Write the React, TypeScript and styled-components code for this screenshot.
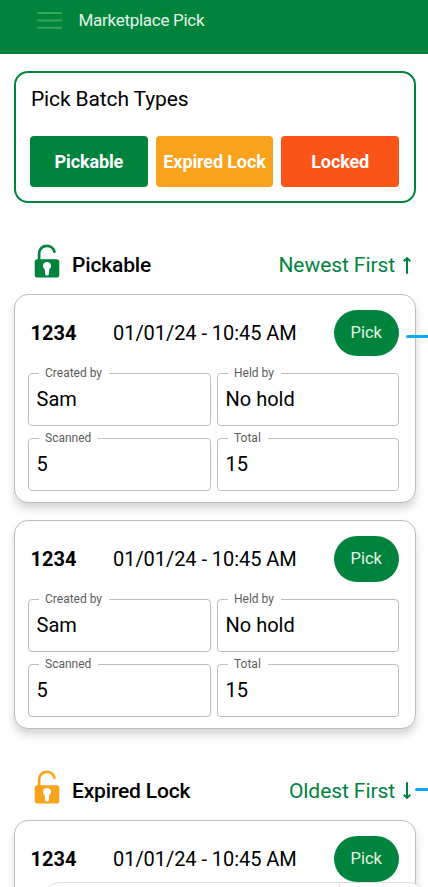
import React from "react";
import styled, { createGlobalStyle } from "styled-components";

const GREEN = "#00843d";
const AMBER = "#f9a21b";
const RED = "#fb5419";

const GlobalStyle = createGlobalStyle`
  *, *::before, *::after { box-sizing: border-box; }
  body { margin: 0; background: #fff; }
  button { font: inherit; border: 0; padding: 0; }
`;

const Screen = styled.div`
  position: relative;
  width: 428px;
  height: 887px;
  overflow: hidden;
  background: #fff;
  color: #000;
  font-family: Roboto, "Liberation Sans", sans-serif;
  font-size: 20px;
  line-height: 24px;
  white-space: nowrap;
`;

const Header = styled.header`
  height: 54px;
  padding: 8px 0 0 37px;
  display: flex;
  align-items: flex-start;
  gap: 16.5px;
  background: ${GREEN};
  color: #e4f3e9;
`;

const MenuButton = styled.button`
  width: 25px;
  height: 25px;
  background: none;
  svg { display: block; }
`;

const Title = styled.h1`
  margin: 0;
  font-size: 17px;
  font-weight: 400;
  line-height: 25px;
  letter-spacing: -0.28px;
`;

const TypesPanel = styled.section`
  margin: 17px 12px 0 14px;
  height: 132px;
  padding: 14px 15px 0 14px;
  border: 2px solid ${GREEN};
  border-radius: 14px;
`;

const PanelTitle = styled.h2`
  margin: 0 0 25px 1px;
  font-size: 21px;
  font-weight: 400;
  line-height: 24px;
  letter-spacing: -0.13px;
`;

const TypeButtons = styled.div`
  display: grid;
  grid-template-columns: repeat(3, 1fr);
  gap: 8px;
`;

const TypeButton = styled.button<{ $color: string }>`
  height: 51px;
  border-radius: 4px;
  background: ${(p) => p.$color};
  color: #fff;
  font-size: 18px;
  font-weight: 700;
  letter-spacing: -0.13px;
`;

const SectionHead = styled.div`
  height: 34px;
  margin: 41px 17px 16px 34px;
  display: flex;
  align-items: flex-start;
`;

const SectionName = styled.h2`
  margin: 9px 0 0 12px;
  font-size: 21px;
  font-weight: 500;
  line-height: 24px;
  letter-spacing: -0.16px;
`;

const Sort = styled.div`
  margin: 9px 0 0 auto;
  display: flex;
  gap: 7px;
  color: ${GREEN};
  font-size: 21px;
  letter-spacing: -0.08px;
  svg { margin-top: 2px; }
`;

const Card = styled.article`
  height: 209px;
  margin: 0 12px 17px 14px;
  padding: 15px 16px 0 13px;
  border: 1px solid #bdbdbd;
  border-radius: 14px;
  background: #fff;
  box-shadow: 0 6px 9px rgba(0, 0, 0, 0.16);
`;

const CardTop = styled.div`
  height: 46px;
  display: flex;
  align-items: center;
`;

const BatchId = styled.strong`
  width: 82.5px;
  margin-left: 2.5px;
  font-weight: 700;
`;

const BatchTime = styled.span`
  letter-spacing: -0.05px;
`;

const PickButton = styled.button`
  width: 65.5px;
  height: 46px;
  margin-left: auto;
  border-radius: 23px;
  background: ${GREEN};
  color: #e4f3e9;
  font-size: 16.5px;
`;

const Fields = styled.div`
  margin-top: 17px;
  display: grid;
  grid-template-columns: 183px 182px;
  justify-content: space-between;
  row-gap: 12px;
`;

const FieldBox = styled.div`
  position: relative;
  height: 53px;
  padding: 13px 0 0 7.5px;
  border: 1px solid #bdbdbd;
  border-radius: 4px;
`;

const FieldLabel = styled.span`
  position: absolute;
  left: 10px;
  top: -8px;
  padding: 0 7px 0 6px;
  background: #fff;
  color: #5c5c5c;
  font-size: 12px;
  line-height: 15px;
`;

const Pointer = styled.i<{ $top: number; $width: number }>`
  position: absolute;
  right: 0;
  top: ${(p) => p.$top}px;
  width: ${(p) => p.$width}px;
  height: 3px;
  border-radius: 2px 0 0 2px;
  background: #0aa7f2;
`;

const BottomSheet = styled.div`
  position: absolute;
  left: 40px;
  top: 882px;
  width: 388px;
  height: 40px;
  border: 1px solid #e0e0e0;
  border-radius: 20px;
  background: #fff;
  &::after {
    content: "";
    position: absolute;
    left: 298px;
    top: 0;
    width: 1px;
    height: 40px;
    background: #e0e0e0;
  }
`;

const LockIcon = ({ color }: { color: string }) => (
  <svg width="26" height="34" viewBox="0 0 26 34" fill="none">
    <path
      d="M5.1 17V9.4C5.1 4.9 8.5 1.8 12.8 1.8c3.7 0 6.9 2.5 7.6 6"
      stroke={color}
      strokeWidth="2.7"
      strokeLinecap="round"
    />
    <rect x="0.7" y="15.3" width="24.6" height="18.2" rx="2.8" fill={color} />
    <path d="M13 18a3.9 3.9 0 0 0-2.2 7.2l.3 4.5a1.9 1.9 0 0 0 3.8 0l.3-4.5A3.9 3.9 0 0 0 13 18Z" fill="#fff" />
  </svg>
);

const Arrow = ({ down }: { down?: boolean }) => (
  <svg width="9" height="20" viewBox="0 0 9 20" fill="none" stroke={GREEN} strokeWidth="2">
    {down ? (
      <path d="M5 1.2v16M1.7 13.8l3.3 3.1 3.3-3.1" />
    ) : (
      <path d="M5 18.8V3M1.7 6.2l3.3-3.1 3.3 3.1" />
    )}
  </svg>
);

const Field = ({ label, value }: { label: string; value: string }) => (
  <FieldBox>
    <FieldLabel>{label}</FieldLabel>
    {value}
  </FieldBox>
);

const BatchCard = ({ collapsed }: { collapsed?: boolean }) => (
  <Card>
    <CardTop>
      <BatchId>1234</BatchId>
      <BatchTime>01/01/24 - 10:45 AM</BatchTime>
      <PickButton>Pick</PickButton>
    </CardTop>
    {!collapsed && (
      <Fields>
        <Field label="Created by" value="Sam" />
        <Field label="Held by" value="No hold" />
        <Field label="Scanned" value="5" />
        <Field label="Total" value="15" />
      </Fields>
    )}
  </Card>
);

export default function App() {
  return (
    <>
      <GlobalStyle />
      <Screen>
        <Header>
          <MenuButton aria-label="Menu">
            <svg width="25" height="25" stroke="#35a754" strokeWidth="2">
              <path d="M0 5h25M0 12.5h25M0 19.7h25" />
            </svg>
          </MenuButton>
          <Title>Marketplace Pick</Title>
        </Header>
        <TypesPanel>
          <PanelTitle>Pick Batch Types</PanelTitle>
          <TypeButtons>
            <TypeButton $color={GREEN}>Pickable</TypeButton>
            <TypeButton $color={AMBER}>Expired Lock</TypeButton>
            <TypeButton $color={RED}>Locked</TypeButton>
          </TypeButtons>
        </TypesPanel>
        <SectionHead>
          <LockIcon color={GREEN} />
          <SectionName>Pickable</SectionName>
          <Sort>Newest First <Arrow /></Sort>
        </SectionHead>
        <BatchCard />
        <BatchCard />
        <SectionHead>
          <LockIcon color={AMBER} />
          <SectionName>Expired Lock</SectionName>
          <Sort>Oldest First <Arrow down /></Sort>
        </SectionHead>
        <BatchCard collapsed />
        <BottomSheet />
        <Pointer $top={335} $width={22} />
        <Pointer $top={788} $width={13} />
      </Screen>
    </>
  );
}
